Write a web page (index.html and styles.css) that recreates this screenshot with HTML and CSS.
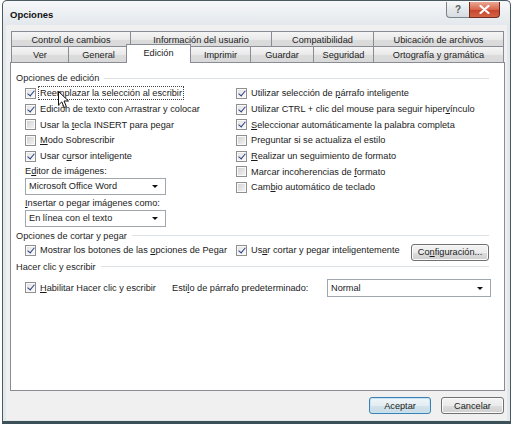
FILE: index.html
```html
<!DOCTYPE html>
<html lang="es">
<head>
    <meta charset="UTF-8">
    <title>Opciones</title>
    <link rel="stylesheet" href="styles.css">
</head>
<body>
    <div class="window">
        <div class="titlebar">
            <span class="title">Opciones</span>
            <div class="caption-buttons">
                <div class="cap help">?</div>
                <div class="cap close">
                    <svg width="11" height="9" viewBox="0 0 11 9">
                        <path d="M1.5 1 L9.5 8 M9.5 1 L1.5 8" stroke="#fff" stroke-width="2.2" stroke-linecap="round"/>
                    </svg>
                </div>
            </div>
        </div>

        <div class="client">
            <div class="tabs">
                <div class="tab-row back">
                    <div class="tab">Control de cambios</div>
                    <div class="tab">Información del usuario</div>
                    <div class="tab">Compatibilidad</div>
                    <div class="tab">Ubicación de archivos</div>
                </div>
                <div class="tab-row front">
                    <div class="tab">Ver</div>
                    <div class="tab">General</div>
                    <div class="tab active">Edición</div>
                    <div class="tab">Imprimir</div>
                    <div class="tab">Guardar</div>
                    <div class="tab">Seguridad</div>
                    <div class="tab">Ortografía y gramática</div>
                </div>
            </div>

            <div class="panel">
                <div class="group-title">Opciones de edición</div>
                <div class="columns">
                    <div class="col">
                        <div class="check first">
                            <i class="box on"></i>
                            <span class="focus">Reemplazar la selección al escribir</span>
                            <svg class="pointer" width="12" height="18" viewBox="0 0 12 18">
                                <path d="M0.5 0.5 L0.5 14 L3.8 10.9 L6.2 16.5 L8.4 15.5 L6 10 L10.5 10 Z" fill="#fff" stroke="#111" stroke-width="1" stroke-linejoin="round"/>
                            </svg>
                        </div>
                        <div class="check"><i class="box on"></i><span>Edición de texto con Arrastrar y colocar</span></div>
                        <div class="check"><i class="box"></i><span>Usar la <u>t</u>ecla INSERT para pegar</span></div>
                        <div class="check"><i class="box"></i><span><u>M</u>odo Sobrescribir</span></div>
                        <div class="check"><i class="box on"></i><span>Usar c<u>u</u>rsor inteligente</span></div>
                        <div class="field-label">E<u>d</u>itor de imágenes:</div>
                        <div class="select small">Microsoft Office Word</div>
                        <div class="field-label second"><u>I</u>nsertar o pegar imágenes como:</div>
                        <div class="select small">En línea con el texto</div>
                    </div>
                    <div class="col">
                        <div class="check"><i class="box on"></i><span>Utilizar selección de <u>p</u>árrafo inteligente</span></div>
                        <div class="check"><i class="box on"></i><span>Utilizar CTRL + clic del mouse para seguir hiper<u>v</u>ínculo</span></div>
                        <div class="check"><i class="box on"></i><span><u>S</u>eleccionar automáticamente la palabra completa</span></div>
                        <div class="check"><i class="box"></i><span>Preguntar si se actualiza el estilo</span></div>
                        <div class="check"><i class="box on"></i><span><u>R</u>ealizar un seguimiento de formato</span></div>
                        <div class="check"><i class="box"></i><span>Marcar incoherencias de <u>f</u>ormato</span></div>
                        <div class="check"><i class="box"></i><span>Cam<u>b</u>io automático de teclado</span></div>
                    </div>
                </div>

                <div class="group-title paste-title">Opciones de cortar y pegar</div>
                <div class="paste-row">
                    <div class="check"><i class="box on"></i><span>Mostrar los botones de las <u>o</u>pciones de Pegar</span></div>
                    <div class="check"><i class="box on"></i><span>Us<u>a</u>r cortar y pegar inteligentemente</span></div>
                    <div class="button config">Co<u>n</u>figuración...</div>
                </div>

                <div class="group-title click-title">Hacer clic y escribir</div>
                <div class="click-row">
                    <div class="check"><i class="box on"></i><span><u>H</u>abilitar Hacer clic y escribir</span></div>
                    <div>Esti<u>l</u>o de párrafo predeterminado:</div>
                    <div class="select wide">Normal</div>
                </div>
            </div>

            <div class="dialog-buttons">
                <div class="button default">Aceptar</div>
                <div class="button">Cancelar</div>
            </div>
        </div>
    </div>
</body>
</html>
```

FILE: styles.css
```css
* {
    box-sizing: border-box;
}

body {
    margin: 0;
    background: #fff;
    font-family: "Liberation Sans", Arial, sans-serif;
    font-size: 9.2px;
    color: #1b1b1b;
}

u {
    text-decoration-thickness: 1px;
    text-underline-offset: 1px;
}

/* ventana */
.window {
    width: 509px;
    height: 424px;
    margin-left: 2px;
    border: 1px solid #4b5961;
    border-bottom: 3px solid #3b5157;
    border-radius: 5px 5px 0 0;
    background: linear-gradient(#f7f8fa, #e3e8ec 24px, #e3e8ec);
    display: flex;
    flex-direction: column;
    padding: 0 3px 1px 3px;
}

.titlebar {
    height: 24px;
    display: flex;
    justify-content: space-between;
    align-items: flex-start;
    flex-shrink: 0;
}

.title {
    font-weight: bold;
    font-size: 9.5px;
    color: #111;
    margin-top: 8px;
    margin-left: 4px;
}

.caption-buttons {
    display: flex;
    margin-right: 7px;
    margin-top: 1px;
}

.cap {
    height: 16px;
    display: flex;
    justify-content: center;
    align-items: center;
}

.help {
    width: 23px;
    border: 1px solid #7b848b;
    border-right: none;
    border-top: none;
    border-radius: 0 0 0 4px;
    background: linear-gradient(#f6f7f8, #e4e8eb 50%, #d6dce0);
    color: #555e66;
    font-size: 10px;
    font-weight: bold;
}

.close {
    width: 31px;
    border: 1px solid #6e2b1e;
    border-top: none;
    border-radius: 0 0 4px 0;
    background: linear-gradient(#eaa793, #d9664d 50%, #c5432a 51%, #d46447);
}

.client {
    flex: 1;
    background: #f0f0f0;
    padding: 6px 2px 0 4px;
    display: flex;
    flex-direction: column;
}

/* pestañas */
.tabs {
    margin-left: 1px;
    width: 492px;
}

.tab-row {
    display: grid;
}

.tab-row.back {
    height: 15px;
    grid-template-columns: 119px 141px 102px 130px;
}

.tab-row.front {
    height: 16px;
    grid-template-columns: 57px 60px 62px 60px 63px 60px 130px;
}

.tab {
    border: 1px solid #898c95;
    border-bottom: none;
    margin-right: -1px;
    background: linear-gradient(#f5f5f5, #e9e9e9 50%, #dcdcdc 51%, #d9d9d9);
    display: flex;
    justify-content: center;
    align-items: center;
    color: #222;
    white-space: nowrap;
}

.tab-row.back .tab {
    margin-bottom: -1px;
}

.tab.active {
    background: #fff;
    margin: -2px -1px -1px -2px;
    z-index: 1;
    padding-bottom: 3px;
}

.panel {
    width: 495px;
    height: 329px;
    background: #fff;
    border: 1px solid #898c95;
    padding: 8px 15px 0 5px;
}

.group-title {
    display: flex;
    align-items: center;
    gap: 5px;
    height: 14.5px;
    color: #1e1e1e;
}

.group-title::after {
    content: "";
    flex: 1;
    border-top: 1px solid #dde2e6;
}

.columns {
    display: grid;
    grid-template-columns: 211px 1fr;
    padding-left: 9px;
}

/* casillas */
.check {
    display: flex;
    align-items: center;
    gap: 4px;
    height: 15.7px;
    white-space: nowrap;
}

.check.first {
    position: relative;
}

.box {
    position: relative;
    width: 11px;
    height: 11px;
    flex-shrink: 0;
    border: 1px solid #8f8f8f;
    background: linear-gradient(135deg, #cfcfcf, #f6f6f6);
    box-shadow: inset 0 0 0 1px #fafafa;
}

.box.on {
    background: linear-gradient(135deg, #e2e2e2, #fbfbfb);
}

.box.on::after {
    content: "";
    position: absolute;
    left: 3px;
    top: 0px;
    width: 3px;
    height: 6px;
    border-right: 1.6px solid #283f7d;
    border-bottom: 1.6px solid #283f7d;
    transform: rotate(40deg);
}

.focus {
    outline: 1px dotted #444;
    outline-offset: 1px;
}

.pointer {
    position: absolute;
    left: 33px;
    top: 5px;
}

.field-label {
    height: 14px;
    line-height: 14px;
}

.field-label.second {
    margin-top: 1px;
}

.select {
    position: relative;
    display: flex;
    align-items: center;
    background: #fff;
    border: 1px solid #a0a6ad;
    padding-left: 3px;
}

.select::after {
    content: "";
    position: absolute;
    right: 7px;
    top: 50%;
    margin-top: -1px;
    border-left: 3px solid transparent;
    border-right: 3px solid transparent;
    border-top: 3px solid #111;
}

.select.small {
    width: 141px;
    height: 17px;
}

.select.wide {
    width: 164px;
    height: 18px;
}

.paste-title {
    margin-top: 2.5px;
    height: 13px;
}

.paste-row {
    display: grid;
    grid-template-columns: 211px 175px 78px;
    align-items: start;
    height: 17.5px;
    padding-left: 9px;
}

.click-title {
    height: 14px;
}

.click-row {
    display: grid;
    grid-template-columns: 147px 155px 164px;
    align-items: center;
    height: 18px;
    margin-top: 5px;
    padding-left: 9px;
}

/* botones */
.button {
    height: 17px;
    border: 1px solid #707070;
    border-radius: 3px;
    background: linear-gradient(#f3f3f3, #ebebeb 50%, #dddddd 51%, #cfcfcf);
    box-shadow: inset 0 0 0 1px #fbfbfb;
    display: flex;
    justify-content: center;
    align-items: center;
    color: #1b1b1b;
    white-space: nowrap;
}

.button.config {
    margin-top: 1.5px;
}

.dialog-buttons {
    display: flex;
    justify-content: flex-end;
    gap: 10px;
    margin-top: 6px;
    margin-right: 1px;
}

.dialog-buttons .button {
    width: 63px;
}

.dialog-buttons .button.default {
    width: 62px;
    border-color: #3c7fb1;
    background: linear-gradient(#f1f6f8, #e3edf2 50%, #d3e3eb 51%, #c8dbe5);
    box-shadow: inset 0 0 0 1px #c4e5f6;
}
```
